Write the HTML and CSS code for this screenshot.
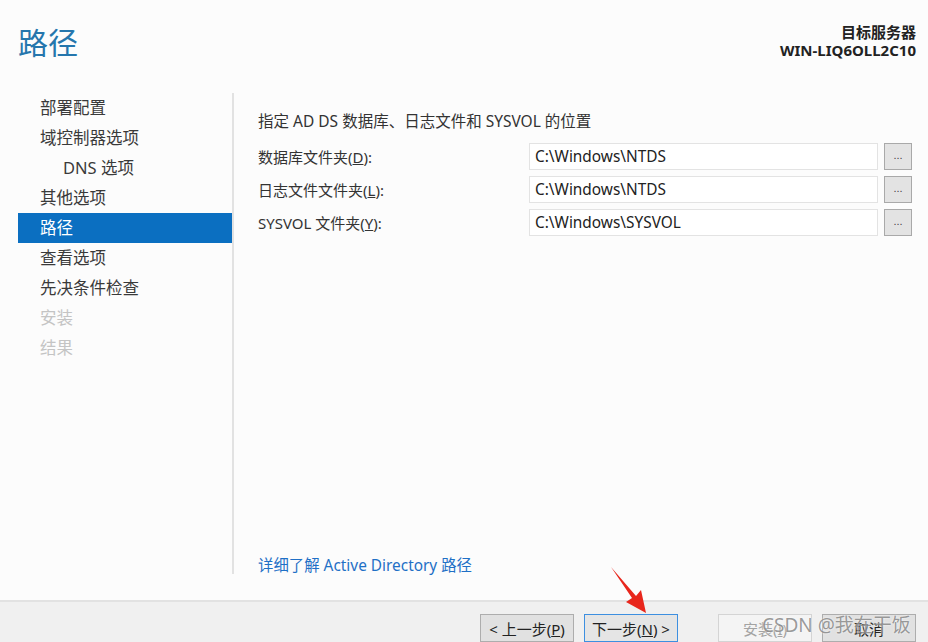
FILE: index.html
```html
<!DOCTYPE html>
<html lang="zh-CN">
<head>
    <meta charset="UTF-8">
    <title>路径</title>
    <link rel="stylesheet" href="styles.css">
</head>
<body>
    <div class="wizard">
        <div class="header">
            <h1 class="title">路径</h1>
            <div class="target">
                <div>目标服务器</div>
                <div>WIN-LIQ6OLL2C10</div>
            </div>
        </div>

        <div class="main">
            <ul class="nav">
                <li>部署配置</li>
                <li>域控制器选项</li>
                <li class="sub">DNS 选项</li>
                <li>其他选项</li>
                <li class="active">路径</li>
                <li>查看选项</li>
                <li>先决条件检查</li>
                <li class="disabled">安装</li>
                <li class="disabled">结果</li>
            </ul>
            <div class="divider"></div>

            <div class="content">
                <p class="desc">指定 AD DS 数据库、日志文件和 SYSVOL 的位置</p>
                <div class="path-row">
                    <label>数据库文件夹(<u>D</u>):</label>
                    <div class="path-box">C:\Windows\NTDS</div>
                    <button class="browse">...</button>
                </div>
                <div class="path-row">
                    <label>日志文件文件夹(<u>L</u>):</label>
                    <div class="path-box">C:\Windows\NTDS</div>
                    <button class="browse">...</button>
                </div>
                <div class="path-row">
                    <label>SYSVOL 文件夹(<u>Y</u>):</label>
                    <div class="path-box">C:\Windows\SYSVOL</div>
                    <button class="browse">...</button>
                </div>
                <a class="more" href="#">详细了解 Active Directory 路径</a>
            </div>
        </div>

        <div class="footer">
            <button class="btn">&lt; 上一步(<u>P</u>)</button>
            <button class="btn primary">下一步(<u>N</u>) &gt;</button>
            <button class="btn off">安装(<u>I</u>)</button>
            <button class="btn">取消</button>
        </div>

        <!-- 截图上的标注箭头和水印 -->
        <svg class="arrow" width="928" height="642" viewBox="0 0 928 642">
            <polygon points="611,567 636,596 641,590 646,613 626,602 632,598" fill="#e8261c"/>
        </svg>
        <div class="watermark">CSDN @我在干饭</div>
    </div>
</body>
</html>
```

FILE: styles.css
```css
body {
    margin: 0;
    font-family: 'Noto Sans', 'Noto Sans CJK SC', sans-serif;
    font-size: 15px;
    color: #333;
    background: #fcfcfc;
}

.wizard {
    position: relative;
    width: 928px;
    height: 642px;
    display: flex;
    flex-direction: column;
    overflow: hidden;
}

.header {
    height: 93px;
    display: flex;
    justify-content: space-between;
    align-items: flex-start;
    padding: 0 12px 0 18px;
    box-sizing: border-box;
}

.title {
    margin: 21px 0 0;
    font-family: 'Noto Sans CJK SC', sans-serif;
    font-size: 30px;
    line-height: 40px;
    font-weight: normal;
    color: #2576ad;
}

.target {
    margin-top: 23px;
    text-align: right;
    font-weight: bold;
    font-size: 15px;
    line-height: 18px;
    color: #222;
}

.main {
    flex: 1;
    display: flex;
}

.nav {
    list-style: none;
    margin: 0 0 0 18px;
    padding: 0;
    width: 215px;
}

.nav li {
    height: 30px;
    line-height: 30px;
    padding-left: 22px;
    font-size: 16.5px;
    color: #3a3a3a;
}

.nav li.sub {
    padding-left: 45px;
}

.nav li.active {
    background: #0b6fc1;
    color: #fff;
}

.nav li.disabled {
    color: #c4c4c4;
}

.divider {
    width: 2px;
    height: 481px;
    background: #e2e2e2;
}

.content {
    flex: 1;
    display: flex;
    flex-direction: column;
    padding: 0 16px 24px 24px;
}

.desc {
    margin: 18px 0 12px;
    line-height: 20px;
    font-size: 15.5px;
}

.path-row {
    display: flex;
    align-items: center;
    margin-bottom: 6px;
}

.path-row label {
    width: 271px;
}

.path-box {
    width: 349px;
    height: 27px;
    line-height: 25px;
    padding-left: 5px;
    box-sizing: border-box;
    border: 1px solid #e3e3e3;
    background: #fff;
    color: #222;
    font-size: 15.4px;
}

.browse {
    width: 28px;
    height: 27px;
    margin-left: 6px;
    padding: 0 0 4px;
    border: 1px solid #a9a9a9;
    background: #e3e3e3;
    font-size: 11px;
    color: #444;
}

.more {
    margin-top: auto;
    line-height: 20px;
    font-size: 15.4px;
    color: #1f70c6;
    text-decoration: none;
}

.footer {
    height: 42px;
    box-sizing: border-box;
    border-top: 2px solid #e2e2e2;
    background: #f0f0f0;
    display: flex;
    justify-content: flex-end;
    align-items: flex-start;
    gap: 10px;
    padding: 12px 12px 0 0;
}

.btn {
    width: 94px;
    height: 28px;
    box-sizing: border-box;
    font-family: 'Noto Sans', 'Noto Sans CJK SC', sans-serif;
    font-size: 15px;
    color: #222;
    border: 1px solid #adadad;
    background: #e1e1e1;
    padding: 0;
}

.btn.primary {
    border-color: #3d8fe0;
    background: #e5e5e5;
}

.btn.off {
    margin-left: 30px;
    border-color: #d4d4d4;
    background: #f4f4f4;
    color: #a3a3a3;
}

.arrow {
    position: absolute;
    left: 0;
    top: 0;
    pointer-events: none;
}

.watermark {
    position: absolute;
    left: 762px;
    top: 610px;
    font-size: 19px;
    color: rgba(110, 110, 110, 0.7);
    text-shadow: 0 0 2px #fff;
}
```
